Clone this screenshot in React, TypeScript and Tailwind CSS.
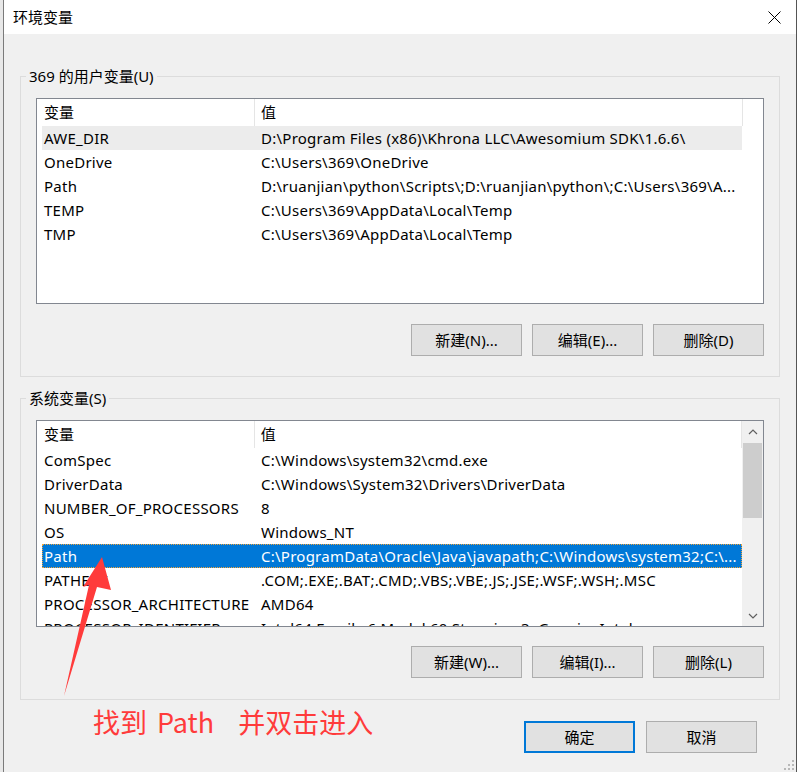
import React from "react";

const FONT = '"Noto Sans", "Noto Sans CJK SC", sans-serif';

type Row = { name: string; value: string };

const userVars: Row[] = [
  { name: "AWE_DIR", value: "D:\\Program Files (x86)\\Khrona LLC\\Awesomium SDK\\1.6.6\\" },
  { name: "OneDrive", value: "C:\\Users\\369\\OneDrive" },
  { name: "Path", value: "D:\\ruanjian\\python\\Scripts\\;D:\\ruanjian\\python\\;C:\\Users\\369\\A..." },
  { name: "TEMP", value: "C:\\Users\\369\\AppData\\Local\\Temp" },
  { name: "TMP", value: "C:\\Users\\369\\AppData\\Local\\Temp" },
];

const sysVars: Row[] = [
  { name: "ComSpec", value: "C:\\Windows\\system32\\cmd.exe" },
  { name: "DriverData", value: "C:\\Windows\\System32\\Drivers\\DriverData" },
  { name: "NUMBER_OF_PROCESSORS", value: "8" },
  { name: "OS", value: "Windows_NT" },
  { name: "Path", value: "C:\\ProgramData\\Oracle\\Java\\javapath;C:\\Windows\\system32;C:\\..." },
  { name: "PATHEXT", value: ".COM;.EXE;.BAT;.CMD;.VBS;.VBE;.JS;.JSE;.WSF;.WSH;.MSC" },
  { name: "PROCESSOR_ARCHITECTURE", value: "AMD64" },
  { name: "PROCESSOR_IDENTIFIER", value: "Intel64 Family 6 Model 60 Stepping 3, GenuineIntel" },
];

function Header() {
  return (
    <div className="flex h-[27px] shrink-0 items-center bg-white">
      <div className="flex h-full w-[218px] items-center border-r border-[#e5e5e5] pl-[7px]">变量</div>
      <div className="flex h-full w-[488px] items-center border-r border-[#e5e5e5] pl-[6px]">值</div>
    </div>
  );
}

function ListRow({ row, state }: { row: Row; state?: "gray" | "blue" }) {
  const cls =
    state === "blue"
      ? "bg-[#0078d7] text-white outline-1 outline-dotted outline-[#f0a33a] -outline-offset-1"
      : state === "gray"
      ? "bg-[#ececec]"
      : "";
  return (
    <div
      className={`ml-[5px] flex h-[24px] w-[700px] shrink-0 items-center whitespace-nowrap tracking-[0.25px] ${cls}`}
    >
      <div className="w-[217px] shrink-0 overflow-hidden pl-[2px]">{row.name}</div>
      <div className="flex-1 overflow-hidden pl-[2px]">{row.value}</div>
    </div>
  );
}

function Btn({ label, primary }: { label: string; primary?: boolean }) {
  return (
    <div
      className={`flex h-[32px] w-[111px] items-center justify-center bg-[#e1e1e1] ${
        primary ? "border-2 border-[#0078d7]" : "border border-[#adadad]"
      }`}
    >
      {label}
    </div>
  );
}

function Chevron({ up }: { up?: boolean }) {
  return (
    <svg width="10" height="6" viewBox="0 0 10 6">
      <polyline
        points={up ? "1,5 5,1 9,5" : "1,1 5,5 9,1"}
        fill="none"
        stroke="#606060"
        strokeWidth="1.2"
      />
    </svg>
  );
}

export default function App() {
  return (
    <div
      className="relative flex h-[772px] w-[797px] overflow-hidden bg-[#f0f0f0] text-[15px] text-black"
      style={{ fontFamily: FONT }}
    >
      {/* window behind */}
      <div className="h-full w-[3px] bg-[#e8e8e8]" />
      <div className="h-full w-px bg-[#7a7a7a]" />

      {/* dialog */}
      <div className="flex w-[792px] flex-col">
        <div className="flex h-[34px] shrink-0 items-center justify-between bg-white pl-[9px] pr-[15px]">
          <span>环境变量</span>
          <svg width="13" height="13" viewBox="0 0 13 13">
            <path d="M0.5 0.5 L12.5 12.5 M12.5 0.5 L0.5 12.5" stroke="#000" strokeWidth="1" />
          </svg>
        </div>

        <div className="relative flex flex-1 flex-col px-4">
          <fieldset className="mt-[32px] border border-[#dcdcdc] px-[15px] pb-[20px] pt-[12px]">
            <legend className="-ml-[10px] px-[3px] leading-[20px]">369 的用户变量(U)</legend>
            <div className="flex h-[206px] flex-col border border-[#828790] bg-white">
              <Header />
              {userVars.map((r, i) => (
                <ListRow key={r.name} row={r} state={i === 0 ? "gray" : undefined} />
              ))}
            </div>
            <div className="mt-[20px] flex justify-end gap-[10px]">
              <Btn label="新建(N)..." />
              <Btn label="编辑(E)..." />
              <Btn label="删除(D)" />
            </div>
          </fieldset>

          <fieldset className="mt-[11px] border border-[#dcdcdc] px-[15px] pb-[21px] pt-[12px]">
            <legend className="-ml-[10px] px-[3px] leading-[20px]">系统变量(S)</legend>
            <div className="flex h-[207px] border border-[#828790] bg-white">
              <div className="flex w-[705px] flex-col overflow-hidden">
                <Header />
                {sysVars.map((r) => (
                  <ListRow key={r.name} row={r} state={r.name === "Path" ? "blue" : undefined} />
                ))}
              </div>
              <div className="flex w-[21px] flex-col bg-[#f0f0f0]">
                <div className="flex h-[21px] items-center justify-center">
                  <Chevron up />
                </div>
                <div className="mx-px mt-px h-[75px] bg-[#cdcdcd]" />
                <div className="flex-1" />
                <div className="flex h-[21px] items-center justify-center">
                  <Chevron />
                </div>
              </div>
            </div>
            <div className="mt-[19px] flex justify-end gap-[10px]">
              <Btn label="新建(W)..." />
              <Btn label="编辑(I)..." />
              <Btn label="删除(L)" />
            </div>
          </fieldset>

          <div className="mt-[21px] flex justify-end gap-[11px] pr-[23px]">
            <Btn label="确定" primary />
            <Btn label="取消" />
          </div>

          {/* resize grip */}
          <svg className="absolute bottom-0 right-0" width="14" height="14" viewBox="0 0 14 14">
            <rect x="10" y="2" width="2" height="2" fill="#b8b8b8" />
            <rect x="6" y="6" width="2" height="2" fill="#b8b8b8" />
            <rect x="10" y="6" width="2" height="2" fill="#b8b8b8" />
            <rect x="2" y="10" width="2" height="2" fill="#b8b8b8" />
            <rect x="6" y="10" width="2" height="2" fill="#b8b8b8" />
            <rect x="10" y="10" width="2" height="2" fill="#b8b8b8" />
          </svg>
        </div>
      </div>
      <div className="h-full w-px bg-[#555]" />

      {/* annotation */}
      <svg className="pointer-events-none absolute left-0 top-0" width="797" height="772">
        <polygon
          points="102,557 111,590 97,587 64,696 89,585 83,587"
          fill="#ff3b3b"
        />
      </svg>
      <div
        className="pointer-events-none absolute left-[93px] top-[704px] flex whitespace-nowrap text-[27px] leading-[36px] text-[#ff3b3b]"
        style={{ fontFamily: '"Noto Sans CJK SC", sans-serif' }}
      >
        <span>找到</span>
        <span className="ml-[10px]">Path</span>
        <span className="ml-[24px]">并双击进入</span>
      </div>
    </div>
  );
}
